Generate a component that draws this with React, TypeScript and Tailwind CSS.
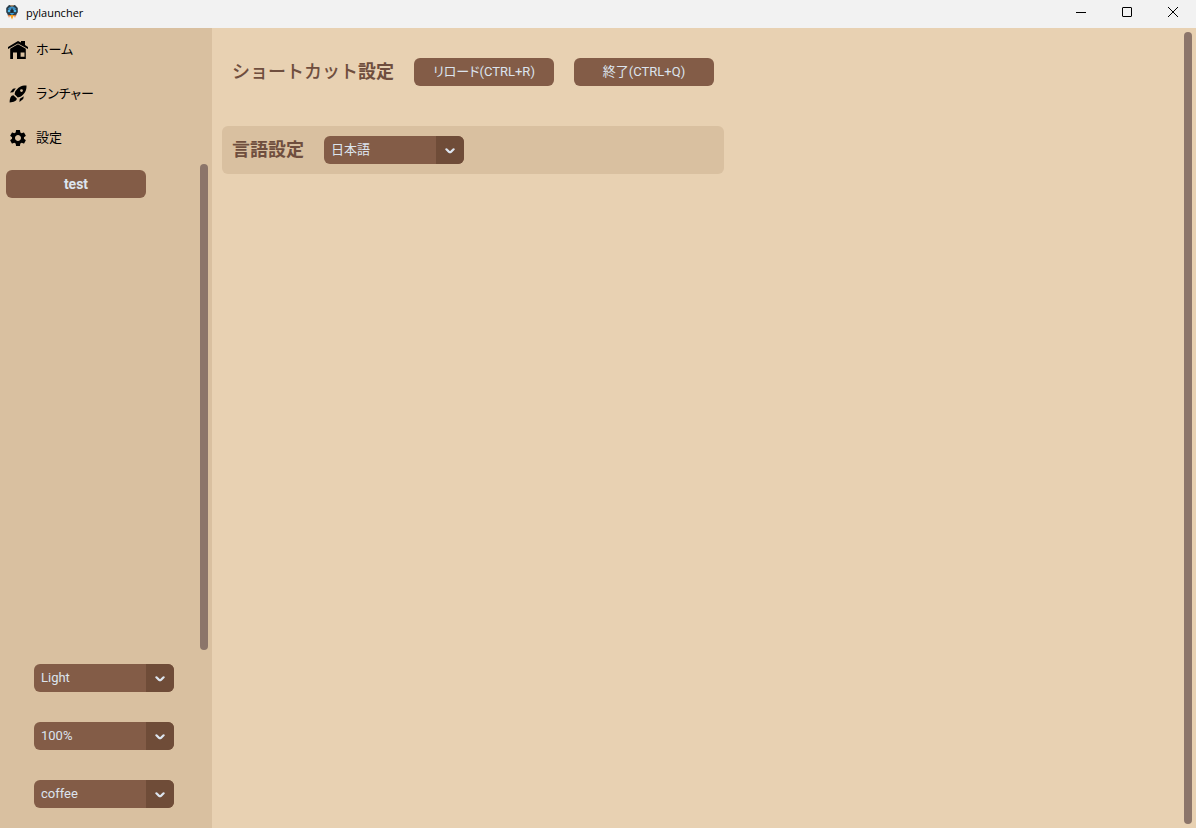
import { useState } from "react";
import type { ReactNode } from "react";
import { MdSettings } from "react-icons/md";

const kana = "[font-feature-settings:'palt']";

function AppLogo() {
  return (
    <svg viewBox="0 0 14 16" className="h-4 w-[14px]" aria-hidden="true">
      <path d="M1.500 8 H12.500 L11 12 H3 Z" fill="#6d7781" />
      <path d="M5 11 H9 L7 15.500 Z" fill="#f9a11b" />
      <path d="M3 11 L4 14 L5.200 11 Z M11 11 L10 14 L8.800 11 Z" fill="#e8813f" />
      <path d="M4 1 H10 L12.800 4 V8 L10.500 11 H3.500 L1.200 8 V4 Z" fill="#2b3e4b" />
      <path d="M3 4.500 Q7 0.500 11 4.500 L10 6 H4 Z" fill="#3b8fc4" />
      <path d="M4.500 1 H9.500 L8 2.500 H6 Z" fill="#a58b6c" />
      <circle cx="4" cy="7" r="1.300" fill="#4bb7ea" />
      <circle cx="10" cy="7" r="1.300" fill="#4bb7ea" />
      <path d="M4.500 9 H9.500 L7 11 Z" fill="#3fa5dc" />
      <path d="M6.300 4.500 H7.700 V8.500 H6.300 Z" fill="#14222c" />
    </svg>
  );
}

function HomeIcon() {
  return (
    <svg viewBox="0 0 20 20" className="size-5" aria-hidden="true">
      <path d="M10 1 L13 2.500 V1 H17 V5 L20 7 V9 L10 3.400 L0 9 V7 Z" fill="black" />
      <path
        fillRule="evenodd"
        d="M10 4.300 L17.800 8.700 V19 H9 V12.500 H5 V19 H2.200 V8.700 Z M12.600 12.500 V16.700 H16.500 V12.500 Z"
        fill="black"
      />
    </svg>
  );
}

function RocketIcon() {
  return (
    <svg viewBox="0 0 20 20" className="size-5" aria-hidden="true">
      <path
        fillRule="evenodd"
        d="M18.500 1.500 C13.500 1.300 10 3.200 7.200 7.600 L6.600 10.200 L9.800 13.400 L12.400 12.800 C16.800 10 18.700 6.500 18.500 1.500 Z M13.500 5.200 A1.400 1.400 0 1 1 13.500 8 A1.400 1.400 0 1 1 13.500 5.200 Z"
        fill="black"
      />
      <path d="M7.800 4.200 L5 4.800 L2 8.600 L5.200 8.200 Z" fill="black" />
      <path d="M15.800 12.200 L15.200 15 L11.400 18 L11.800 14.800 Z" fill="black" />
      <path d="M5.400 11.200 C2.800 11.400 1.700 14.200 1.600 18.400 C5.800 18.300 8.600 17.200 8.800 14.600 Z" fill="black" />
    </svg>
  );
}

function NavItem({ icon, label }: { icon: ReactNode; label: string }) {
  return (
    <button type="button" className="flex h-11 w-full items-center gap-2 px-2 text-left text-[13px] text-black">
      <span className="flex size-5 items-center justify-center">{icon}</span>
      <span className={kana}>{label}</span>
    </button>
  );
}

function OptionMenu({ label, id, options }: { label?: string; id: string; options: string[] }) {
  const [value, setValue] = useState(options[0]);
  return (
    <div className="grid h-7 w-[140px] overflow-hidden rounded-md bg-[#835c47] text-[13px] text-[#dce4ee]">
      <select
        id={id}
        aria-label={label}
        value={value}
        onChange={(e) => setValue(e.target.value)}
        className="col-start-1 row-start-1 appearance-none bg-transparent pr-8 pl-[7px]"
      >
        {options.map((o) => (
          <option key={o}>{o}</option>
        ))}
      </select>
      <span className="pointer-events-none col-start-1 row-start-1 flex w-7 items-center justify-center justify-self-end bg-[#6f4c38]">
        <svg viewBox="0 0 10 6" className="mt-px h-[6px] w-[10px]" aria-hidden="true">
          <path d="M1.400 1.300 L3.800 3.600 Q5 4.700 6.200 3.600 L8.600 1.300" fill="none" stroke="#dce4ee" strokeWidth="2.200" strokeLinecap="round" />
        </svg>
      </span>
    </div>
  );
}

function ActionButton({ children, className = "text-[13px]" }: { children: ReactNode; className?: string }) {
  return (
    <button type="button" className={`h-7 w-[140px] rounded-md bg-[#835c47] text-[#dce4ee] ${className}`}>
      {children}
    </button>
  );
}

function TitleBar() {
  return (
    <header className="flex h-7 shrink-0 items-center bg-[#f2f2f2] pb-1 pl-[5px] text-black">
      <AppLogo />
      <h1 className="ml-[7px] flex-1 pt-px font-['Open_Sans','Noto_Sans',sans-serif] text-[11px] leading-none">pylauncher</h1>
      <button type="button" aria-label="Minimize" className="flex h-6 w-[46px] items-center justify-center">
        <svg viewBox="0 0 12 12" className="size-3"><path d="M1 6.500 H11" stroke="currentColor" /></svg>
      </button>
      <button type="button" aria-label="Maximize" className="flex h-6 w-[46px] items-center justify-center">
        <svg viewBox="0 0 12 12" className="size-3"><rect x="1.500" y="1.500" width="9" height="9" rx="0.500" fill="none" stroke="currentColor" /></svg>
      </button>
      <button type="button" aria-label="Close" className="flex h-6 w-[46px] items-center justify-center">
        <svg viewBox="0 0 12 12" className="size-3"><path d="M1 1 L11 11 M11 1 L1 11" stroke="currentColor" /></svg>
      </button>
    </header>
  );
}

export default function App() {
  return (
    <div className="flex h-screen flex-col font-['Roboto','Noto_Sans_CJK_JP',sans-serif]">
      <TitleBar />
      <div className="flex min-h-0 flex-1">
        <aside className="flex w-[212px] shrink-0 flex-col bg-[#d9c0a0]">
          <nav>
            <NavItem icon={<HomeIcon />} label="ホーム" />
            <NavItem icon={<RocketIcon />} label="ランチャー" />
            <NavItem icon={<MdSettings className="size-5" />} label="設定" />
          </nav>
          <div className="flex min-h-0 flex-1 justify-between p-1">
            <div className="pt-[6px] pl-[2px]">
              <ActionButton className="text-[14px] font-bold">test</ActionButton>
            </div>
            <div className="w-2 rounded-full bg-[#8c756a]" />
          </div>
          <div className="flex flex-col gap-[30px] pt-[10px] pb-5 pl-[34px]">
            <OptionMenu id="appearance" label="Appearance" options={["Light", "Dark", "System"]} />
            <OptionMenu id="scaling" label="Scaling" options={["100%", "80%", "90%", "110%", "120%"]} />
            <OptionMenu id="theme" label="Theme" options={["coffee", "blue", "green"]} />
          </div>
        </aside>
        <main className="flex min-w-0 flex-1 justify-between bg-[#e8d1b2] p-1">
          <div className="flex w-[508px] flex-col gap-[30px] pt-4 pl-[6px]">
            <section className="flex h-12 items-center gap-5 px-[10px]">
              <h2 className="pb-[2px] text-[18px] font-medium whitespace-nowrap text-[#6f4e3e]">
                ショートカット<span className="font-bold">設定</span>
              </h2>
              <ActionButton>
                <span className={kana}>リロード</span>(CTRL+R)
              </ActionButton>
              <ActionButton>
                <span className={kana}>終了</span>(CTRL+Q)
              </ActionButton>
            </section>
            <section className="flex h-12 items-center gap-5 rounded-md bg-[#d9c0a0] px-[10px]">
              <label htmlFor="language" className="pb-[2px] text-[18px] font-bold whitespace-nowrap text-[#6f4e3e]">言語設定</label>
              <OptionMenu id="language" options={["日本語", "English"]} />
            </section>
          </div>
          <div className="w-2 rounded-full bg-[#8c756a]" />
        </main>
      </div>
    </div>
  );
}
